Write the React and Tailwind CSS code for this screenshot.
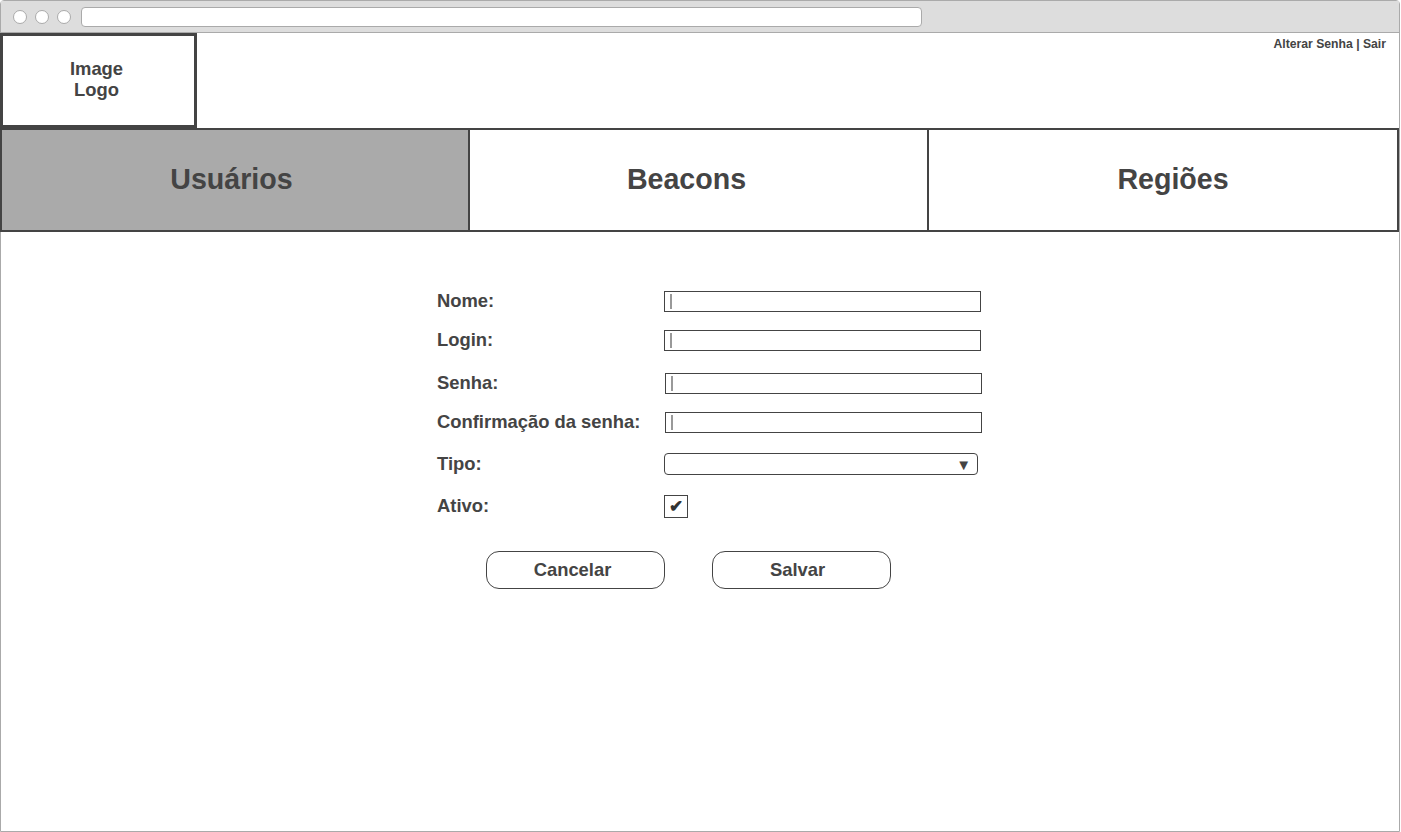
import React from "react";

const font = { fontFamily: '"Liberation Sans", Arial, sans-serif' };

function TextField({ shift }) {
  return (
    <div
      className={`h-[21px] w-[317px] border border-[#444] bg-white flex items-center pl-[5px] ${shift ? "ml-px" : ""}`}
    >
      <span className="h-[15px] w-[1.5px] bg-[#999]" />
    </div>
  );
}

function Row({ label, children, className }) {
  return (
    <div className={`flex items-center ${className}`}>
      <div className="w-[227px] text-[18.4px] leading-[21px] font-bold text-[#444] -mt-[2px]">{label}</div>
      {children}
    </div>
  );
}

export default function App() {
  const tabs = [
    { name: "Usuários", active: true, cls: "w-[470px] pr-[7px]" },
    { name: "Beacons", active: false, cls: "w-[461px] -ml-[2px] pr-[24px]" },
    { name: "Regiões", active: false, cls: "w-[472px] -ml-[2px] pl-[20px]" },
  ];

  return (
    <div style={font} className="w-[1401px] h-[832px] bg-white overflow-hidden">
      <div className="w-[1400px] h-[832px] border border-[#aaa] rounded-t-[4px] flex flex-col">
        {/* browser chrome */}
        <div className="h-[32px] bg-[#ddd] border-b border-[#aaa] flex items-center pl-[12px]">
          <div className="flex gap-[8px]">
            <span className="w-[14px] h-[14px] rounded-full bg-white border border-[#aaa]" />
            <span className="w-[14px] h-[14px] rounded-full bg-white border border-[#aaa]" />
            <span className="w-[14px] h-[14px] rounded-full bg-white border border-[#aaa]" />
          </div>
          <div className="ml-[10px] w-[841px] h-[20px] bg-white border border-[#aaa] rounded-[4px]" />
        </div>

        {/* header */}
        <div className="flex h-[95px] -ml-px">
          <div className="w-[197px] h-[95px] border-[3px] border-[#444] flex items-center justify-center text-center text-[18.4px] leading-[21px] font-bold text-[#444] pr-[4px] pb-[4px]">
            Image
            <br />
            Logo
          </div>
          <div className="flex-1 flex justify-end pt-[4px] pr-[13px]">
            <span className="text-[12.2px] leading-[14px] font-bold text-[#444]">Alterar Senha | Sair</span>
          </div>
        </div>

        {/* tabs */}
        <div className="flex h-[104px] -ml-px">
          {tabs.map((t) => (
            <div
              key={t.name}
              className={`${t.cls} h-[104px] border-2 border-[#444] flex items-center justify-center text-[28.6px] font-bold text-[#444] pb-[2px] ${t.active ? "bg-[#aaa]" : "bg-white"}`}
            >
              {t.name}
            </div>
          ))}
        </div>

        {/* form */}
        <div className="flex flex-col pl-[436px] pt-[59px]">
          <Row label="Nome:">
            <TextField />
          </Row>
          <Row label="Login:" className="mt-[18px]">
            <TextField />
          </Row>
          <Row label="Senha:" className="mt-[22px]">
            <TextField shift />
          </Row>
          <Row label="Confirmação da senha:" className="mt-[18px]">
            <TextField shift />
          </Row>
          <Row label="Tipo:" className="mt-[20px]">
            <div className="h-[22px] w-[314px] border border-[#444] rounded-[4px] bg-white flex items-center justify-end pr-[6px]">
              <span className="text-[15px] leading-none text-[#444]">▼</span>
            </div>
          </Row>
          <Row label="Ativo:" className="mt-[20px]">
            <div className="h-[23px] w-[24px] border border-[#444] bg-white flex items-center justify-center text-[17px] leading-none font-bold text-[#333]">
              ✔
            </div>
          </Row>
          <div className="flex mt-[33px] pl-[49px] gap-[47px]">
            <button className="w-[179px] h-[38px] border border-[#444] rounded-[13px] bg-white text-[18.4px] font-bold text-[#444] pr-[6px]">
              Cancelar
            </button>
            <button className="w-[179px] h-[38px] border border-[#444] rounded-[13px] bg-white text-[18.4px] font-bold text-[#444] pr-[8px]">
              Salvar
            </button>
          </div>
        </div>
      </div>
    </div>
  );
}
